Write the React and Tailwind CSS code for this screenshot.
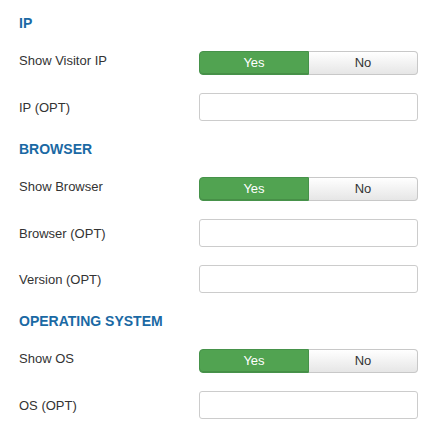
import React, { useState } from 'react';

const Toggle = ({ value, onChange }) => (
    <div className="flex w-[219px] h-[24px] text-[13px]">
        <button
            type="button"
            onClick={() => onChange(true)}
            className={
                value
                    ? 'w-[110px] rounded-l-[4px] bg-[#51a351] border border-[#46924a] text-white shadow-[inset_0_-1px_0_rgba(0,0,0,0.12)]'
                    : 'w-[110px] rounded-l-[4px] bg-gradient-to-b from-white to-[#e6e6e6] border border-[#c8c8c8] text-[#333]'
            }
        >
            Yes
        </button>
        <button
            type="button"
            onClick={() => onChange(false)}
            className={
                !value
                    ? 'flex-1 rounded-r-[4px] bg-[#bd362f] border border-[#a9302a] text-white'
                    : 'flex-1 rounded-r-[4px] bg-gradient-to-b from-white to-[#e6e6e6] border border-l-0 border-[#c8c8c8] text-[#333]'
            }
        >
            No
        </button>
    </div>
);

const Row = ({ label, children, input }) => (
    <div className="flex items-start mb-[18px]">
        <label className={`w-[180px] text-[13px] leading-[18px] text-[#333] ${input ? 'pt-[6px]' : 'pt-[1px]'}`}>
            {label}
        </label>
        {children}
    </div>
);

const TextField = ({ name, value, onChange }) => (
    <input
        type="text"
        name={name}
        value={value}
        onChange={onChange}
        className="w-[219px] h-[28px] border border-[#ccc] rounded-[3px] px-2 text-[13px] text-[#555] bg-white outline-none"
    />
);

const Heading = ({ children }) => (
    <h3 className="text-[14px] leading-[20px] font-bold text-[#1a69a4] mb-[18px]">{children}</h3>
);

const App = () => {
    const [formData, setFormData] = useState({
        showIp: true,
        ip: '',
        showBrowser: true,
        browser: '',
        version: '',
        showOs: true,
        os: '',
    });

    const handleChange = (e) => {
        const { name, value } = e.target;
        setFormData({ ...formData, [name]: value });
    };

    const setFlag = (name) => (v) => setFormData({ ...formData, [name]: v });

    return (
        <div className="pl-[19px] pt-[13px] bg-white min-h-[433px] font-['Liberation_Sans',Arial,sans-serif]">
            <Heading>IP</Heading>
            <Row label="Show Visitor IP">
                <Toggle value={formData.showIp} onChange={setFlag('showIp')} />
            </Row>
            <Row label="IP (OPT)" input>
                <TextField name="ip" value={formData.ip} onChange={handleChange} />
            </Row>

            <Heading>BROWSER</Heading>
            <Row label="Show Browser">
                <Toggle value={formData.showBrowser} onChange={setFlag('showBrowser')} />
            </Row>
            <Row label="Browser (OPT)" input>
                <TextField name="browser" value={formData.browser} onChange={handleChange} />
            </Row>
            <Row label="Version (OPT)" input>
                <TextField name="version" value={formData.version} onChange={handleChange} />
            </Row>

            <Heading>OPERATING SYSTEM</Heading>
            <Row label="Show OS">
                <Toggle value={formData.showOs} onChange={setFlag('showOs')} />
            </Row>
            <Row label="OS (OPT)" input>
                <TextField name="os" value={formData.os} onChange={handleChange} />
            </Row>
        </div>
    );
};

export default App;
